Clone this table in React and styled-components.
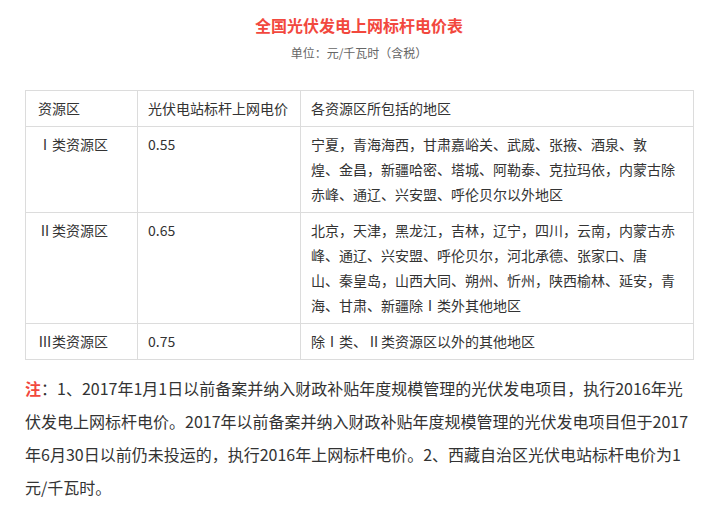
import React from 'react';
import styled, { createGlobalStyle } from 'styled-components';

const rows = [
  {
    zone: 'Ⅰ类资源区',
    price: '0.55',
    areas: [
      '宁夏，青海海西，甘肃嘉峪关、武威、张掖、酒泉、敦',
      '煌、金昌，新疆哈密、塔城、阿勒泰、克拉玛依，内蒙古除',
      '赤峰、通辽、兴安盟、呼伦贝尔以外地区',
    ],
  },
  {
    zone: 'Ⅱ类资源区',
    price: '0.65',
    areas: [
      '北京，天津，黑龙江，吉林，辽宁，四川，云南，内蒙古赤',
      '峰、通辽、兴安盟、呼伦贝尔，河北承德、张家口、唐',
      '山、秦皇岛，山西大同、朔州、忻州，陕西榆林、延安，青',
      '海、甘肃、新疆除Ⅰ类外其他地区',
    ],
  },
  {
    zone: 'Ⅲ类资源区',
    price: '0.75',
    areas: ['除Ⅰ类、Ⅱ类资源区以外的其他地区'],
  },
];

const noteLines = [
  '：1、2017年1月1日以前备案并纳入财政补贴年度规模管理的光伏发电项目，执行2016年光',
  '伏发电上网标杆电价。2017年以前备案并纳入财政补贴年度规模管理的光伏发电项目但于2017',
  '年6月30日以前仍未投运的，执行2016年上网标杆电价。2、西藏自治区光伏电站标杆电价为1',
  '元/千瓦时。',
];

const withBreaks = (lines) =>
  lines.map((line, i) => (
    <React.Fragment key={i}>
      {i > 0 && <br />}
      {line}
    </React.Fragment>
  ));

const App = () => {
  return (
    <>
      <GlobalStyle />
      <Page>
        <Title>全国光伏发电上网标杆电价表</Title>
        <Subtitle>单位：元/千瓦时（含税）</Subtitle>
        <PriceTable>
          <thead>
            <tr>
              <Cell as="th" $width={112} $first>资源区</Cell>
              <Cell as="th" $width={163}>光伏电站标杆上网电价</Cell>
              <Cell as="th" $width={393}>各资源区所包括的地区</Cell>
            </tr>
          </thead>
          <tbody>
            {rows.map((row) => (
              <tr key={row.zone}>
                <Cell $first>{row.zone}</Cell>
                <Cell>{row.price}</Cell>
                <Cell>{withBreaks(row.areas)}</Cell>
              </tr>
            ))}
          </tbody>
        </PriceTable>
        <Note>
          <NoteMark>注</NoteMark>
          {withBreaks(noteLines)}
        </Note>
      </Page>
    </>
  );
};

export default App;

// Styled Components
const GlobalStyle = createGlobalStyle`
  body {
    margin: 0;
    background: #fff;
    font-family: "Noto Sans CJK SC", "Liberation Sans", sans-serif;
  }
`;

const Page = styled.div`
  width: 668px;
  padding: 13px 30px 0 25px;
  color: #333;
`;

const Title = styled.h2`
  margin: 0;
  text-align: center;
  font-size: 16px;
  line-height: 24px;
  font-weight: bold;
  color: #f2483e;
`;

const Subtitle = styled.p`
  margin: 7px 0 0;
  text-align: center;
  font-size: 12px;
  line-height: 18px;
  color: #666;
`;

const PriceTable = styled.table`
  width: 668px;
  margin-top: 28px;
  border-collapse: collapse;
  table-layout: fixed;
`;

const Cell = styled.td`
  box-sizing: border-box;
  width: ${(p) => (p.$width ? `${p.$width}px` : 'auto')};
  padding: 5px 10px 5px ${(p) => (p.$first ? '12px' : '10px')};
  border: 1px solid #dcdcdc;
  font-size: 14px;
  line-height: 25px;
  font-weight: normal;
  text-align: left;
  vertical-align: top;
  color: #333;
  white-space: nowrap;
`;

const Note = styled.p`
  margin: 12px 0 0;
  font-size: 16px;
  line-height: 33px;
  color: #333;
  white-space: nowrap;
`;

const NoteMark = styled.strong`
  color: #f2483e;
  font-weight: bold;
`;
